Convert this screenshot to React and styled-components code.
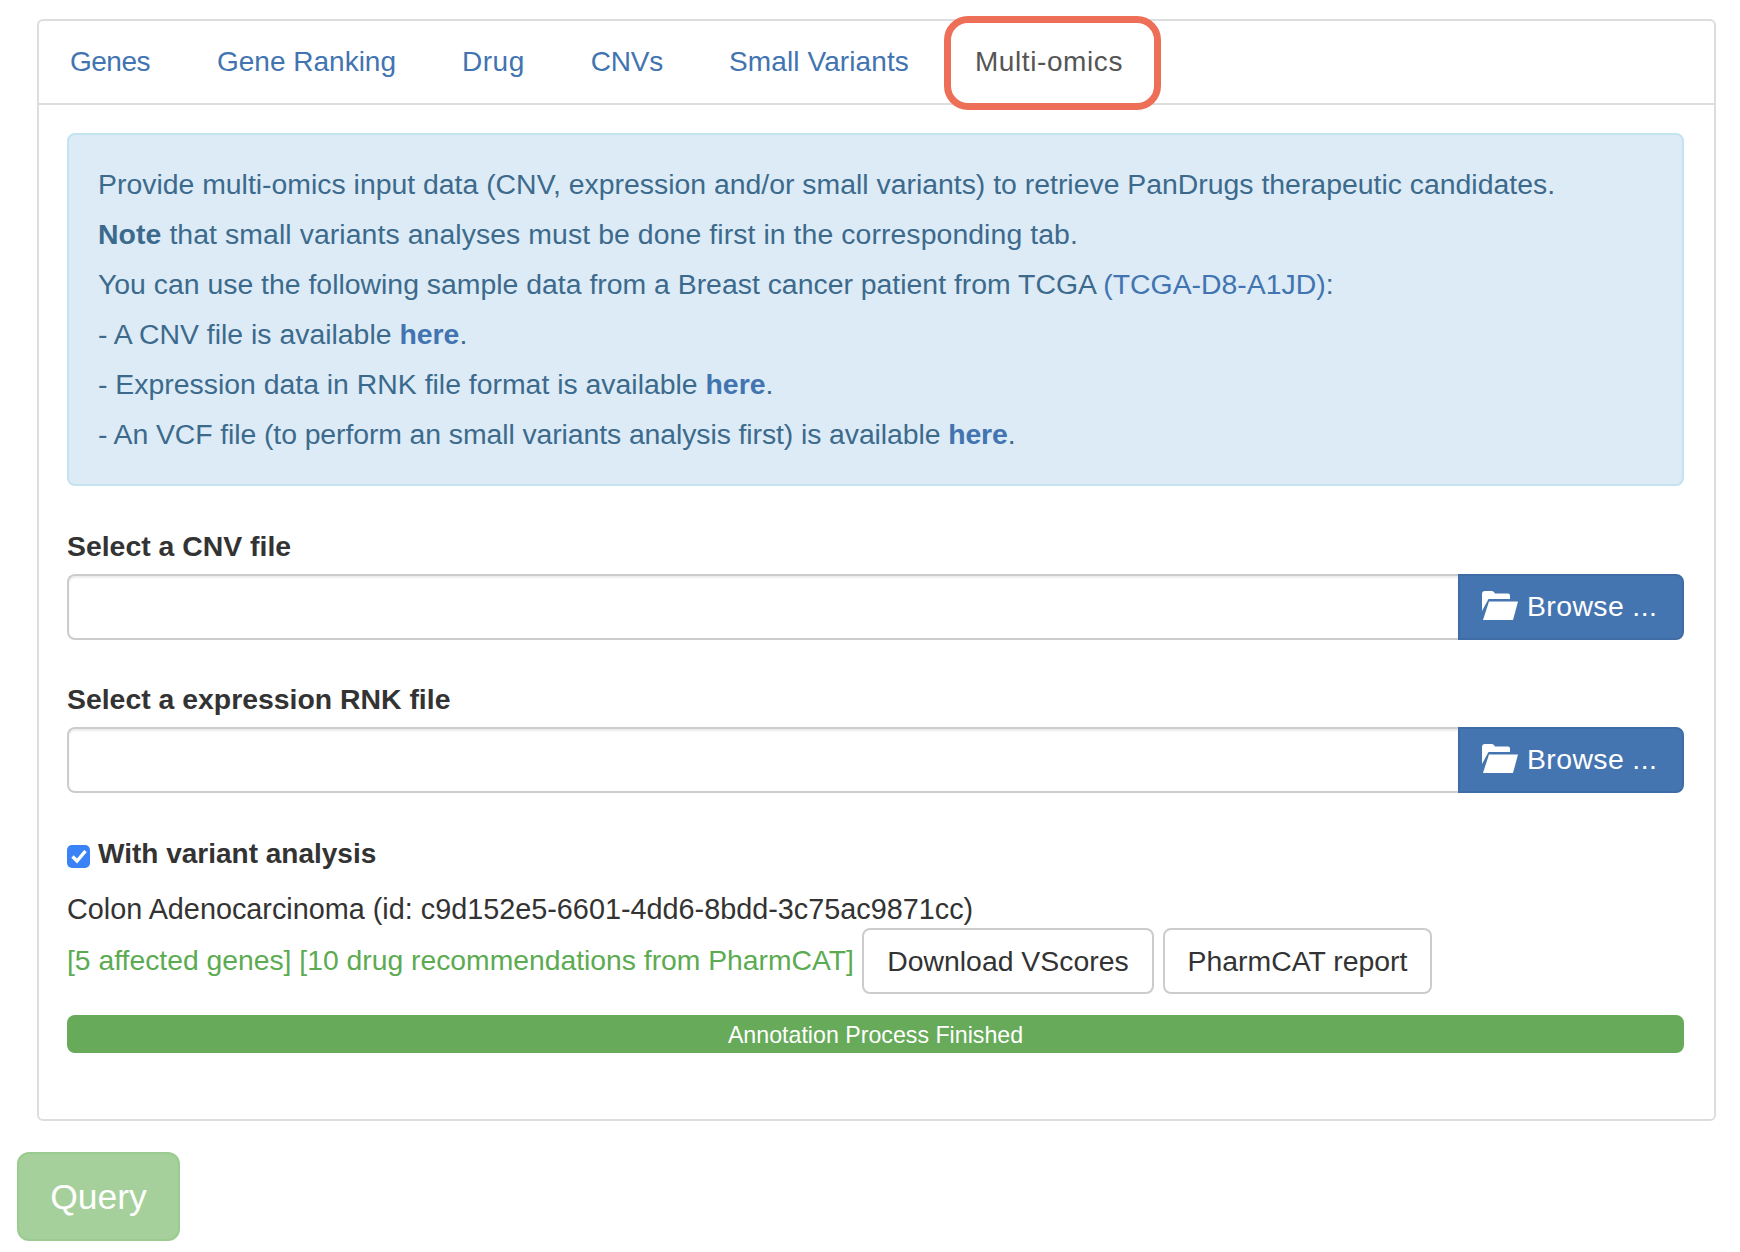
import React from 'react';
import styled, { createGlobalStyle } from 'styled-components';

const GlobalStyle = createGlobalStyle`
  html, body {
    margin: 0;
    background: #fff;
  }
  body {
    font-family: "Liberation Sans", Arial, sans-serif;
    font-size: 28.4px;
    line-height: 40px;
    color: #333;
  }
  * { box-sizing: border-box; }
`;

const Page = styled.div`
  width: 1740px;
  height: 1252px;
  padding: 19px 24px 0 0;
  overflow: hidden;
`;

const Card = styled.div`
  margin-left: 37px;
  height: 1102px;
  border: 2px solid #ddd;
  border-radius: 6px;
`;

const TabBar = styled.ul`
  display: flex;
  height: 84px;
  margin: 0;
  padding: 0;
  list-style: none;
  border-bottom: 2px solid #ddd;
`;

const Tab = styled.li`
  position: relative;
  padding: 21px 33px;
  height: 82px;
  font-size: 28px;
  letter-spacing: ${({ $spacing }) => $spacing || 0}px;
  color: ${({ $active }) => ($active ? '#555' : '#4174b0')};

  &:first-child {
    margin-left: -2px;
    padding-right: 34px;
  }
`;

const TabMark = styled.span`
  position: absolute;
  left: 2px;
  top: -5px;
  width: 217px;
  height: 94px;
  border: 7px solid #ee6f57;
  border-radius: 24px;
`;

const Body = styled.div`
  padding: 28px 30px 28px 28px;
`;

const Alert = styled.div`
  height: 353px;
  padding: 29px 28px 24px 29px;
  background: #dcebf6;
  border: 2px solid #c3e4ee;
  border-radius: 8px;
  color: #3c6a8c;
`;

const AlertLine = styled.p`
  margin: 0 0 10px;
  letter-spacing: ${({ $spacing }) => $spacing || 0}px;
`;

const InlineLink = styled.a`
  color: #4174b0;
  font-weight: ${({ $bold }) => ($bold ? 700 : 400)};
`;

const Field = styled.div`
  margin-top: ${({ $top }) => $top}px;
`;

const FieldLabel = styled.label`
  display: block;
  font-weight: 700;
  color: #333;
  margin-bottom: 8px;
`;

const InputGroup = styled.div`
  display: flex;
  height: 66px;
`;

const FileInput = styled.div`
  flex: 1;
  background: #fff;
  border: 2px solid #ccc;
  border-right: 0;
  border-radius: 8px 0 0 8px;
  box-shadow: inset 0 2px 2px rgba(0, 0, 0, 0.075);
`;

const BrowseButton = styled.div`
  display: flex;
  align-items: center;
  gap: 9px;
  width: 226px;
  padding: 0 0 3px 22px;
  background: #4575b0;
  border: 2px solid #3f6ca5;
  border-radius: 0 8px 8px 0;
  color: #fff;
  letter-spacing: 0.4px;
`;

const FolderSvg = styled.svg`
  fill: #fff;
`;

const CheckRow = styled.div`
  display: flex;
  align-items: center;
  gap: 8px;
  margin-top: 41px;
  height: 40px;
  font-size: 28px;
  font-weight: 700;
`;

const CheckBox = styled.span`
  display: flex;
  align-items: center;
  justify-content: center;
  width: 23px;
  height: 23px;
  margin-top: 4px;
  background: #3b82f6;
  border-radius: 5px;
`;

const SampleName = styled.div`
  margin-top: 15px;
  font-size: 28.8px;
`;

const ResultRow = styled.div`
  display: flex;
  align-items: center;
  gap: 8px;
  margin-top: -1px;
`;

const ResultText = styled.span`
  margin-bottom: 2px;
  font-size: 28.3px;
  color: #5cab52;
`;

const OutlineButton = styled.div`
  display: flex;
  align-items: center;
  justify-content: center;
  height: 66px;
  width: ${({ $width }) => $width}px;
  margin-left: ${({ $gap }) => $gap || 0}px;
  background: #fff;
  border: 2px solid #ccc;
  border-radius: 8px;
`;

const Progress = styled.div`
  margin-top: 21px;
  height: 38px;
  background: #66aa5a;
  border-radius: 8px;
  color: #fff;
  font-size: 23.2px;
  line-height: 40px;
  text-align: center;
`;

const QueryButton = styled.div`
  display: flex;
  align-items: center;
  justify-content: center;
  width: 163px;
  height: 89px;
  margin: 31px 0 0 17px;
  background: #a5d09b;
  border: 2px solid #9ccb92;
  border-radius: 12px;
  color: #fff;
  font-size: 35.5px;
`;

const FolderIcon = () => (
  <FolderSvg width="36" height="29" viewBox="0 0 36 29">
    <path d="M0 3Q0 0 3 0H10Q12 0 13 2.5H26Q28 2.5 28 4.5V8H6.5L0 20Z" />
    <path d="M7 10.5H36L31 29H1Z" />
  </FolderSvg>
);

const tabs = [
  { label: 'Genes', spacing: -0.5 },
  { label: 'Gene Ranking' },
  { label: 'Drug', spacing: 0.5 },
  { label: 'CNVs', spacing: -0.2 },
  { label: 'Small Variants', spacing: 0.1 },
];

const App = () => (
  <>
    <GlobalStyle />
    <Page>
      <Card>
        <TabBar>
          {tabs.map((t) => <Tab key={t.label} $spacing={t.spacing}>{t.label}</Tab>)}
          <Tab $active $spacing={0.6}>
            Multi-omics
            <TabMark />
          </Tab>
        </TabBar>
        <Body>
          <Alert>
            <AlertLine>Provide multi-omics input data (CNV, expression and/or small variants) to retrieve PanDrugs therapeutic candidates.</AlertLine>
            <AlertLine $spacing={0.08}><b>Note</b> that small variants analyses must be done first in the corresponding tab.</AlertLine>
            <AlertLine>You can use the following sample data from a Breast cancer patient from TCGA <InlineLink>(TCGA-D8-A1JD)</InlineLink>:</AlertLine>
            <AlertLine>- A CNV file is available <InlineLink $bold>here</InlineLink>.</AlertLine>
            <AlertLine>- Expression data in RNK file format is available <InlineLink $bold>here</InlineLink>.</AlertLine>
            <AlertLine $spacing={-0.09}>- An VCF file (to perform an small variants analysis first) is available <InlineLink $bold>here</InlineLink>.</AlertLine>
          </Alert>
          <Field $top={40}>
            <FieldLabel>Select a CNV file</FieldLabel>
            <InputGroup>
              <FileInput />
              <BrowseButton><FolderIcon />Browse ...</BrowseButton>
            </InputGroup>
          </Field>
          <Field $top={39}>
            <FieldLabel>Select a expression RNK file</FieldLabel>
            <InputGroup>
              <FileInput />
              <BrowseButton><FolderIcon />Browse ...</BrowseButton>
            </InputGroup>
          </Field>
          <CheckRow>
            <CheckBox>
              <svg width="18" height="18" viewBox="0 0 18 18" fill="none" stroke="#fff" strokeWidth="3.4">
                <path d="M2.5 9.5L7 14L15.5 4" />
              </svg>
            </CheckBox>
            With variant analysis
          </CheckRow>
          <SampleName>Colon Adenocarcinoma (id: c9d152e5-6601-4dd6-8bdd-3c75ac9871cc)</SampleName>
          <ResultRow>
            <ResultText>[5 affected genes] [10 drug recommendations from PharmCAT]</ResultText>
            <OutlineButton $width={292}>Download VScores</OutlineButton>
            <OutlineButton $width={269} $gap={1}>PharmCAT report</OutlineButton>
          </ResultRow>
          <Progress>Annotation Process Finished</Progress>
        </Body>
      </Card>
      <QueryButton>Query</QueryButton>
    </Page>
  </>
);

export default App;
